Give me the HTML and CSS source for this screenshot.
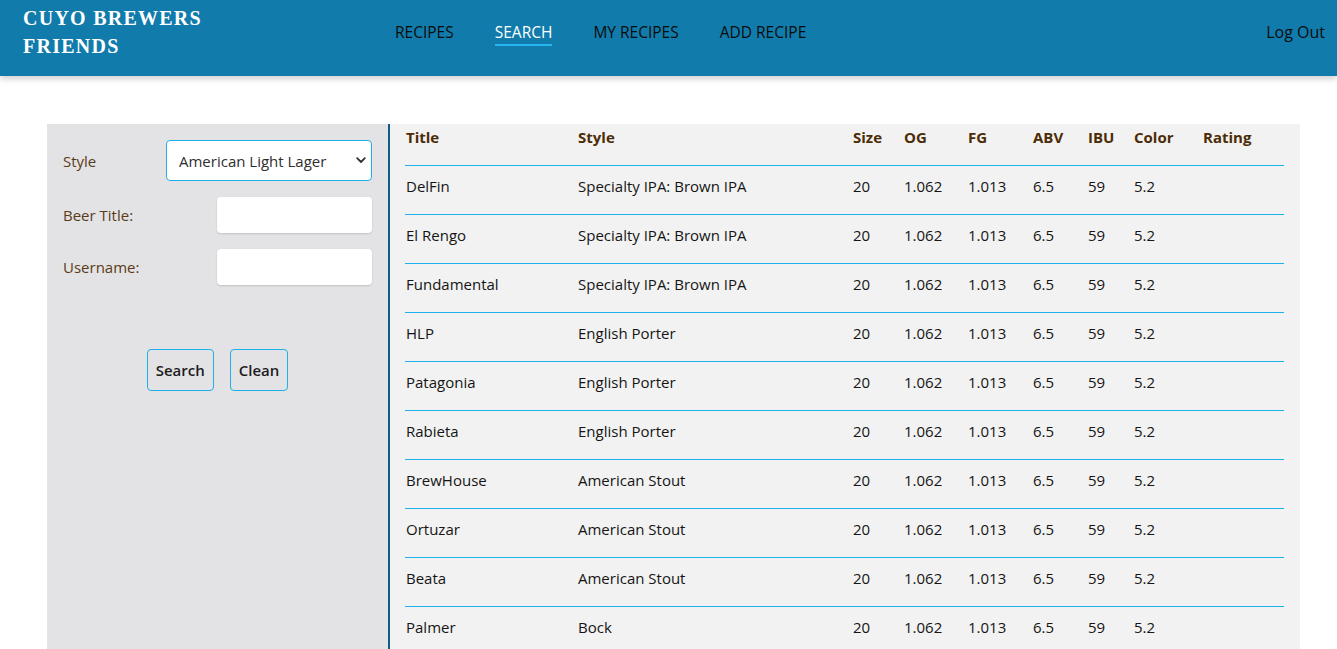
FILE: index.html
```html
<!DOCTYPE html>
<html lang="en">
<head>
<meta charset="utf-8">
<title>Cuyo Brewers Friends</title>
<link rel="stylesheet" href="styles.css">
</head>
<body>
<header class="topbar">
  <div class="brand">CUYO BREWERS<br>FRIENDS</div>
  <nav class="nav">
    <a class="nav-link" href="#">RECIPES</a>
    <a class="nav-link active" href="#">SEARCH</a>
    <a class="nav-link" href="#">MY RECIPES</a>
    <a class="nav-link" href="#">ADD RECIPE</a>
  </nav>
  <a class="logout" href="#">Log Out</a>
</header>

<main class="content">
  <aside class="filters">
    <div class="field field-style">
      <label class="label">Style</label>
      <div class="select-wrap">
        <select class="select">
          <option>American Light Lager</option>
        </select>
        <svg class="chev" width="10" height="7" viewBox="0 0 10 7"><path d="M1.2 1.2 L5 5 L8.8 1.2" fill="none" stroke="#333" stroke-width="1.8" stroke-linecap="round" stroke-linejoin="round"/></svg>
      </div>
    </div>
    <div class="field">
      <label class="label">Beer Title:</label>
      <input class="input" type="text">
    </div>
    <div class="field">
      <label class="label">Username:</label>
      <input class="input" type="text">
    </div>
    <div class="actions">
      <button class="btn">Search</button>
      <button class="btn">Clean</button>
    </div>
  </aside>

  <section class="results">
    <table class="table">
      <colgroup>
        <col class="c-title"><col class="c-style"><col class="c-size"><col class="c-og"><col class="c-fg"><col class="c-abv"><col class="c-ibu"><col class="c-color"><col class="c-rating">
      </colgroup>
      <thead>
        <tr><th>Title</th><th>Style</th><th>Size</th><th>OG</th><th>FG</th><th>ABV</th><th>IBU</th><th>Color</th><th>Rating</th></tr>
      </thead>
      <tbody>
        <tr><td>DelFin</td><td>Specialty IPA: Brown IPA</td><td>20</td><td>1.062</td><td>1.013</td><td>6.5</td><td>59</td><td>5.2</td><td></td></tr>
        <tr><td>El Rengo</td><td>Specialty IPA: Brown IPA</td><td>20</td><td>1.062</td><td>1.013</td><td>6.5</td><td>59</td><td>5.2</td><td></td></tr>
        <tr><td>Fundamental</td><td>Specialty IPA: Brown IPA</td><td>20</td><td>1.062</td><td>1.013</td><td>6.5</td><td>59</td><td>5.2</td><td></td></tr>
        <tr><td>HLP</td><td>English Porter</td><td>20</td><td>1.062</td><td>1.013</td><td>6.5</td><td>59</td><td>5.2</td><td></td></tr>
        <tr><td>Patagonia</td><td>English Porter</td><td>20</td><td>1.062</td><td>1.013</td><td>6.5</td><td>59</td><td>5.2</td><td></td></tr>
        <tr><td>Rabieta</td><td>English Porter</td><td>20</td><td>1.062</td><td>1.013</td><td>6.5</td><td>59</td><td>5.2</td><td></td></tr>
        <tr><td>BrewHouse</td><td>American Stout</td><td>20</td><td>1.062</td><td>1.013</td><td>6.5</td><td>59</td><td>5.2</td><td></td></tr>
        <tr><td>Ortuzar</td><td>American Stout</td><td>20</td><td>1.062</td><td>1.013</td><td>6.5</td><td>59</td><td>5.2</td><td></td></tr>
        <tr><td>Beata</td><td>American Stout</td><td>20</td><td>1.062</td><td>1.013</td><td>6.5</td><td>59</td><td>5.2</td><td></td></tr>
        <tr><td>Palmer</td><td>Bock</td><td>20</td><td>1.062</td><td>1.013</td><td>6.5</td><td>59</td><td>5.2</td><td></td></tr>
      </tbody>
    </table>
  </section>
</main>
</body>
</html>
```

FILE: styles.css
```css
* { box-sizing: border-box; }

body {
  margin: 0;
  background: #ffffff;
  font-family: "Open Sans", "Noto Sans", sans-serif;
  font-size: 15px;
  color: #151515;
}

.topbar {
  height: 76px;
  background: #117bab;
  display: flex;
  align-items: flex-start;
  padding: 4px 12px 0 23px;
  box-shadow: 0 3px 6px rgba(0, 0, 0, 0.18);
  position: relative;
}

.brand {
  width: 372px;
  font-family: "Liberation Serif", "Times New Roman", serif;
  font-weight: bold;
  font-size: 20px;
  letter-spacing: 1.25px;
  line-height: 28px;
  color: #ffffff;
}

.nav {
  display: flex;
  gap: 41px;
  padding-top: 16px;
  flex: 1;
}

.nav-link {
  color: #0c0c0c;
  text-decoration: none;
  font-size: 15.5px;
  line-height: 24px;
  padding-bottom: 0;
  border-bottom: 2px solid transparent;
}

.nav-link.active {
  color: #ffffff;
  border-bottom-color: #27b5ee;
}

.logout {
  color: #0c0c0c;
  text-decoration: none;
  font-size: 16px;
  line-height: 24px;
  padding-top: 16px;
}

.content {
  margin: 48px 37px 0 47px;
  display: flex;
  align-items: stretch;
}

.filters {
  width: 343px;
  flex-shrink: 0;
  background: #e3e3e5;
  border-right: 2px solid #0f5d83;
  padding: 16px 16px 40px 16px;
  display: flex;
  flex-direction: column;
  gap: 16px;
}

.field {
  display: flex;
  align-items: center;
  justify-content: space-between;
}

.label {
  color: #5a3b18;
  font-size: 15px;
}

.select-wrap {
  position: relative;
  width: 206px;
}

.select {
  appearance: none;
  -webkit-appearance: none;
  width: 206px;
  height: 41px;
  border: 1px solid #1eb0ea;
  border-radius: 4px;
  background: #ffffff;
  font-family: "Open Sans", "Noto Sans", sans-serif;
  font-size: 15px;
  color: #2e2e2e;
  padding: 0 24px 0 12px;
}

.chev {
  position: absolute;
  right: 6px;
  top: 17px;
  pointer-events: none;
}

.input {
  width: 155px;
  height: 36px;
  border: none;
  border-radius: 4px;
  background: #ffffff;
  box-shadow: 0 1px 2px rgba(0, 0, 0, 0.15);
}

.actions {
  display: flex;
  justify-content: center;
  gap: 16px;
  margin-top: 48px;
}

.btn {
  height: 42px;
  padding: 0 8px;
  background: transparent;
  border: 1px solid #1eb0ea;
  border-radius: 4px;
  font-family: "Open Sans", "Noto Sans", sans-serif;
  font-size: 15px;
  font-weight: 600;
  color: #1c1c1c;
}

.results {
  flex: 1;
  background: #f2f2f2;
  padding: 0 16px 0 15px;
}

.table {
  width: 879px;
  table-layout: fixed;
  border-collapse: collapse;
}

.c-title { width: 172px; }
.c-style { width: 275px; }
.c-size { width: 51px; }
.c-og { width: 64px; }
.c-fg { width: 65px; }
.c-abv { width: 55px; }
.c-ibu { width: 46px; }
.c-color { width: 69px; }
.c-rating { width: 82px; }

.table tr {
  border-bottom: 1px solid #1eb0ea;
}

.table th {
  text-align: left;
  font-weight: 700;
  color: #4c2c06;
  height: 41px;
  padding: 2px 0 0 1px;
  vertical-align: top;
  line-height: 22px;
}

.table td {
  height: 49px;
  padding: 9px 0 0 1px;
  vertical-align: top;
  line-height: 22px;
  white-space: nowrap;
}
```
